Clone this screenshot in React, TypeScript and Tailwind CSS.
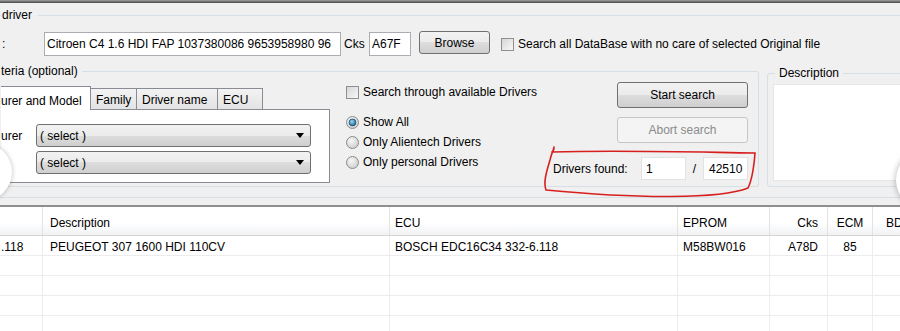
import React from 'react';

const btnFace = 'bg-[linear-gradient(#f2f2f2,#ebebeb_50%,#dddddd_50%,#cfcfcf)]';

const CheckBox = () => (
  <span className="inline-block w-[13px] h-[13px] shrink-0 border border-[#8f8f8f] bg-[linear-gradient(135deg,#d6d6d6,#f8f8f8)]" />
);

const Radio = ({ checked }: { checked?: boolean }) => (
  <svg width="13" height="13" viewBox="0 0 13 13" className="shrink-0">
    <defs>
      <radialGradient id="rb" cx="40%" cy="35%" r="70%">
        <stop offset="0" stopColor="#f6f6f6" />
        <stop offset="1" stopColor="#cdcdcd" />
      </radialGradient>
      <radialGradient id="rd" cx="40%" cy="35%" r="70%">
        <stop offset="0" stopColor="#9adcfb" />
        <stop offset="1" stopColor="#1a5d8b" />
      </radialGradient>
    </defs>
    <circle cx="6.5" cy="6.5" r="6" fill="url(#rb)" stroke="#8c8c8c" />
    {checked && <circle cx="6.5" cy="6.5" r="3.4" fill="url(#rd)" stroke="#1c4d72" strokeWidth="0.8" />}
  </svg>
);

const Combo = () => (
  <div className={`flex items-center h-[23px] w-[275px] rounded-[3px] border border-[#707070] ${btnFace} pl-[3px] pr-[6px]`}>
    <span className="flex-1">( select )</span>
    <svg width="8" height="5" viewBox="0 0 8 5">
      <path d="M0 0h8L4 5z" fill="#000" />
    </svg>
  </div>
);

const cols = [
  { w: 'w-[43px]', head: '', cell: '.118', align: 'text-left pl-[1px]' },
  { w: 'w-[347px]', head: 'Description', cell: 'PEUGEOT 307 1600 HDI 110CV', align: 'text-left pl-[7px]' },
  { w: 'w-[288px]', head: 'ECU', cell: 'BOSCH EDC16C34 332-6.118', align: 'text-left pl-[5px]' },
  { w: 'w-[92px]', head: 'EPROM', cell: 'M58BW016', align: 'text-left pl-[5px]' },
  { w: 'w-[58px]', head: 'Cks', cell: 'A78D', align: 'text-right pr-[9px]' },
  { w: 'w-[45px]', head: 'ECM', cell: '85', align: 'text-center' },
  { w: 'w-[60px]', head: 'BD', cell: '', align: 'text-left pl-[13px]' },
];

const App: React.FC = () => {
  return (
    <div className="relative w-[900px] h-[331px] overflow-hidden bg-[#f0f0f0] text-[12px] text-black font-['Liberation_Sans',Arial,sans-serif] leading-[18px]">
      <div className="h-[3px] bg-[linear-gradient(#a0a0a0,#474747)]" />

      {/* Original driver group */}
      <fieldset className="mt-[3px] -ml-[12px] pl-[12px] w-[940px] border border-[#d5dfe5] rounded-[3px] pb-[10px]">
        <legend className="pl-[1px] pr-[6px] h-[18px]">driver</legend>

        <div className="flex items-center h-[24px] mt-[8px]">
          <span className="w-[43px] pl-[1px]">:</span>
          <div className="h-[24px] w-[297px] border border-[#abadb3] bg-white pl-[2px] flex items-center overflow-hidden whitespace-nowrap">
            Citroen C4 1.6 HDI FAP 1037380086 9653958980 96
          </div>
          <span className="ml-[3px] w-[25px]">Cks</span>
          <div className="h-[24px] w-[42px] border border-[#abadb3] bg-white pl-[2px] flex items-center">A67F</div>
          <button className={`ml-[8px] -mt-[3px] h-[23px] w-[71px] rounded-[3px] border border-[#707070] ${btnFace}`}>Browse</button>
          <span className="ml-[11px] flex items-center gap-[4px]">
            <CheckBox />
            Search all DataBase with no care of selected Original file
          </span>
        </div>

        <div className="flex items-start mt-[6px]">
          {/* Criteria group */}
          <fieldset className="w-[758px] border border-l-0 border-[#d5dfe5] rounded-r-[3px] pb-[3px]">
            <legend className="pr-[4px] h-[18px]">teria (optional)</legend>
            <div className="flex">
              <div className="mt-[6px] w-[329px]">
                <div className="flex items-end h-[23px]">
                  <div className="relative z-10 h-[24px] -mb-px w-[90px] border border-l-0 border-b-0 border-[#898c95] bg-white whitespace-nowrap pt-[5px]">
                    urer and Model
                  </div>
                  {['Family', 'Driver name', 'ECU'].map((t, i) => (
                    <div
                      key={t}
                      className={`h-[21px] ${i === 0 ? 'w-[47px] -ml-px' : i === 1 ? 'w-[82px] -ml-px' : 'w-[46px] -ml-px'} border border-b-0 border-[#898c95] bg-[linear-gradient(#f3f3f3,#e3e3e3)] pl-[5px] pt-[2px]`}
                    >
                      {t}
                    </div>
                  ))}
                </div>
                <div className="h-[74px] border border-l-0 border-[#898c95] bg-white pt-[14px] flex flex-col gap-[4px]">
                  <div className="flex items-center">
                    <span className="w-[35px]">urer</span>
                    <Combo />
                  </div>
                  <div className="flex items-center">
                    <span className="w-[35px]" />
                    <Combo />
                  </div>
                </div>
              </div>

              <div className="ml-[16px] w-[207px]">
                <div className="mt-[5px] h-[14px] flex items-center gap-[4px] whitespace-nowrap">
                  <CheckBox />
                  Search through available Drivers
                </div>
                <div className="mt-[13px] flex flex-col">
                  {[
                    { t: 'Show All', c: true },
                    { t: 'Only Alientech Drivers', c: false },
                    { t: 'Only personal Drivers', c: false },
                  ].map((r) => (
                    <div key={r.t} className="h-[20px] flex items-center gap-[4px] whitespace-nowrap">
                      <Radio checked={r.c} />
                      {r.t}
                    </div>
                  ))}
                </div>
              </div>

              <div className="w-[195px] flex flex-col items-end">
                <button className={`mt-[2px] h-[26px] w-[131px] rounded-[3px] border border-[#707070] ${btnFace}`}>Start search</button>
                <button className="mt-[9px] h-[26px] w-[131px] rounded-[3px] border border-[#c4c6c8] bg-[#f4f4f4] text-[#8b8b8b]">Abort search</button>
                <div className="mt-[14px] w-full h-[23px] flex items-center">
                  <span className="w-[88px] whitespace-nowrap">Drivers found:</span>
                  <div className="h-[23px] w-[45px] border border-[#e2e2e2] bg-white pl-[4px] flex items-center">1</div>
                  <span className="w-[17px] text-center">/</span>
                  <div className="h-[23px] w-[45px] border border-[#e2e2e2] bg-white pl-[5px] flex items-center">42510</div>
                </div>
              </div>
            </div>
          </fieldset>

          {/* Description group */}
          <fieldset className="ml-[8px] mt-[2px] w-[160px] border border-[#d5dfe5] rounded-[3px] pl-[5px] pb-[5px]">
            <legend className="ml-[2px] px-[4px] h-[18px]">Description</legend>
            <div className="mt-[2px] h-[97px] bg-white border border-[#e6e6e6]" />
          </fieldset>
        </div>
      </fieldset>

      {/* splitter */}
      <div className="mt-[7px] h-[2px] bg-[#8e8e8e]" />

      {/* grid */}
      <div className="bg-white">
        <div className="flex h-[29px] border-b border-[#d5d5d5] bg-[linear-gradient(#ffffff,#ffffff_55%,#f1f2f4)]">
          {cols.map((c, i) => (
            <div key={i} className={`${c.w} shrink-0 border-r border-[#e2e3e5] flex items-center pt-[3px] whitespace-nowrap ${c.align === 'text-center' ? 'justify-center' : c.align.startsWith('text-right') ? 'justify-end ' + c.align.split(' ')[1] : c.align.split(' ')[1]}`}>
              {c.head}
            </div>
          ))}
        </div>
        {[0, 1, 2, 3, 4].map((r) => (
          <div key={r} className="flex h-[20px] border-b border-[#ececec]">
            {cols.map((c, i) => (
              <div key={i} className={`${c.w} shrink-0 border-r border-[#ededed] pt-[2px] whitespace-nowrap ${c.align}`}>
                {r === 0 ? c.cell : ''}
              </div>
            ))}
          </div>
        ))}
      </div>

      {/* white blobs at the edges of the photo */}
      <div className="absolute left-[-46px] top-[143px] w-[58px] h-[58px] rounded-full bg-white shadow-[0_0_5px_rgba(0,0,0,0.25)]" />
      <div className="absolute left-[896px] top-[150px] w-[60px] h-[60px] rounded-full bg-white shadow-[0_0_6px_rgba(0,0,0,0.3)]" />

      {/* red marker around the counter */}
      <svg className="absolute left-[540px] top-[146px]" width="222" height="56" viewBox="0 0 222 56">
        <path
          d="M14 1 C13 6 12 8 12 6 C80 4 150 6 215 7 C214 20 212 34 208 42 C180 53 100 53 6 44 C3 36 7 24 10 14 C11 10 12 6 14 3"
          fill="none"
          stroke="#d81f1f"
          strokeWidth="1.6"
          strokeLinecap="round"
        />
      </svg>
    </div>
  );
};

export default App;
